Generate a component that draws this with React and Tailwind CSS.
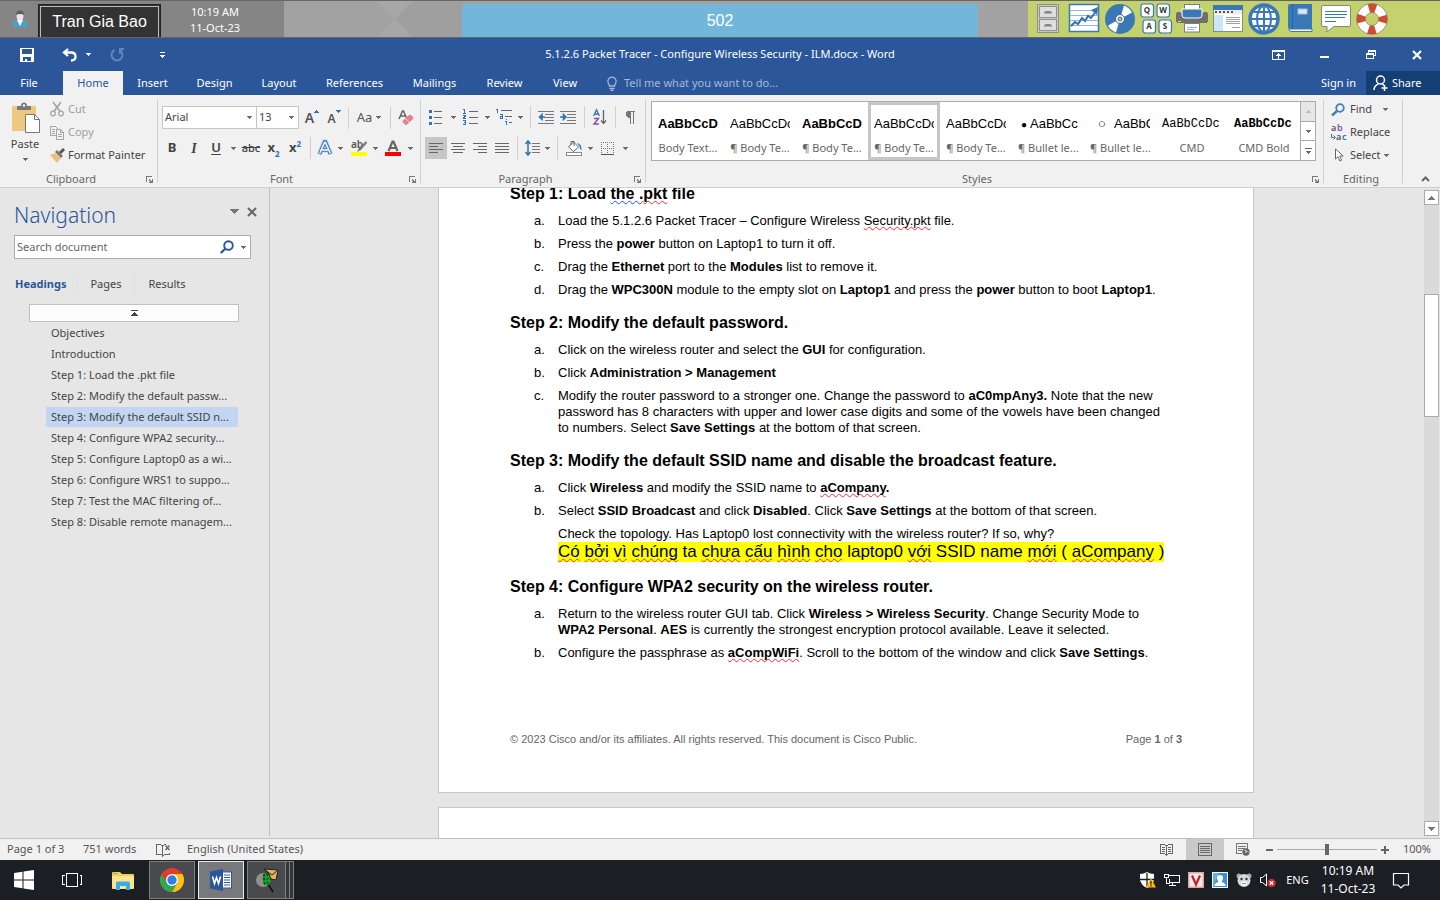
const UI = "font-['Noto_Sans','Open_Sans',sans-serif]";
const DOC = "font-['Liberation_Sans',Arial,sans-serif]";

/* ---------- shared pieces ---------- */

function Svg({ w = 16, h = 16, crisp, className = "", children }) {
  return (
    <svg
      width={w}
      height={h}
      viewBox={`0 0 ${w} ${h}`}
      fill="none"
      aria-hidden="true"
      shapeRendering={crisp ? "crispEdges" : "auto"}
      className={`shrink-0 overflow-visible ${className}`}
    >
      {children}
    </svg>
  );
}

function Arrow({ color = "#6b6b6b" }) {
  return (
    <Svg w={5} h={3} crisp>
      <path d="M0 0h5v1h-1v1h-1v1h-1v-1h-1v-1h-1z" fill={color} />
    </Svg>
  );
}

function Tool({ label, className = "w-[22px]", children }) {
  return (
    <button type="button" aria-label={label} className={`flex h-[22px] shrink-0 items-center justify-center ${className}`}>
      {children}
    </button>
  );
}

function Drop({ label, className = "w-3" }) {
  return (
    <Tool label={label} className={className}>
      <Arrow />
    </Tool>
  );
}

function Sep({ className = "w-2" }) {
  return (
    <span className={`flex h-[22px] shrink-0 justify-center ${className}`}>
      <span className="w-px bg-[#d0d0d0]" />
    </span>
  );
}

function Divider() {
  return <span className="my-1 w-px shrink-0 bg-[#d0d0d0]" />;
}

function Group({ label, launcher, className = "", children }) {
  return (
    <section className={`flex flex-col ${className}`}>
      {children}
      <div className="mt-auto flex h-4 items-center pr-1 text-[#666]">
        <span className={`flex-1 text-center ${launcher ? "pr-1" : ""}`}>{label}</span>
        {launcher && (
          <button type="button" aria-label={`${label} settings`}>
            <Svg w={7} h={7} crisp>
              <path d="M0 0h6v1h-5v5h-1zM3 3h1v1h1v1h1v-2h1v4h-4v-1h1v-1h-1z" fill="#777" />
            </Svg>
          </button>
        )}
      </div>
    </section>
  );
}

/* ---------- class control bar ---------- */

function Cabinet() {
  return (
    <Svg w={32} h={32}>
      <rect x="5.5" y="1.5" width="21" height="28" fill="#c9c9c9" stroke="#8f8f8f" />
      <rect x="7.5" y="3.5" width="17" height="11" fill="#dedede" stroke="#8f8f8f" />
      <rect x="7.5" y="16.500" width="17" height="11" fill="#dedede" stroke="#8f8f8f" />
      <path d="M12 10.500q0-2.500 2.500-2.500h3q2.500 0 2.500 2.500zM12 23.500q0-2.500 2.500-2.500h3q2.500 0 2.500 2.500z" fill="#858585" />
    </Svg>
  );
}
function Chart() {
  return (
    <Svg w={32} h={32}>
      <rect x="1.500" y="1.500" width="29" height="27" fill="#fff" stroke="#3d77b5" strokeWidth="1.500" />
      <path d="M2 7.500h28M2 12.500h28M2 17.500h28M2 22.500h28" stroke="#8fb6db" />
      <path d="M3 23l4-4 3 2 4-6 3 3 3-5 3 2 6-8" stroke="#3571b0" strokeWidth="2" />
      <path d="M23 7l7-3-1 8z" fill="#3571b0" />
    </Svg>
  );
}
function Disc() {
  return (
    <Svg w={32} h={32}>
      <circle cx="16" cy="16" r="15" fill="#3b78b8" />
      <path d="M16 16L20 2.500a14 14 0 0 1 8 7zM16 16L12 29.500a14 14 0 0 1-8-7z" fill="#fff" />
      <circle cx="16" cy="16" r="4.500" fill="#fff" stroke="#2c669f" />
      <circle cx="16" cy="16" r="2" fill="#c3d26c" stroke="#2c669f" />
    </Svg>
  );
}
function Keys() {
  const keys = [["Q", 1, 1], ["W", 17, 1], ["A", 3, 17], ["S", 19, 17]];
  return (
    <Svg w={32} h={32}>
      {keys.map(([k, x, y]) => (
        <g key={k}>
          <rect x={x} y={y} width="12.500" height="13" rx="2.500" fill="#fff" stroke="#3b78b8" strokeWidth="1.200" />
          <text x={x + 6} y={y + 9} textAnchor="middle" fontSize="8" fontWeight="700" fontFamily="Open Sans" fill="#333">{k}</text>
        </g>
      ))}
    </Svg>
  );
}
function Printer() {
  return (
    <Svg w={32} h={32}>
      <path d="M2 9q-2 0-2 2v7q0 2 2 2h28q2 0 2-2v-7q0-2-2-2h-3v2h-22v-2z" fill="#6f6f6f" />
      <path d="M5 10h22v6h-22z" fill="#6f6f6f" />
      <rect x="8.500" y="1.500" width="15" height="6" fill="#fff" stroke="#7c7c7c" />
      <path d="M6 6h20v6q0 3-3 3h-14q-3 0-3-3z" fill="#3b78b8" stroke="#fff" />
      <rect x="2" y="18" width="3" height="1" fill="#d7e04f" />
      <path d="M8.500 20.500h15v8.500h-15z" fill="#fff" stroke="#7c7c7c" />
      <path d="M11 24.500h10M11 26.500h7" stroke="#8fb6db" />
    </Svg>
  );
}
function Browser() {
  return (
    <Svg w={32} h={32}>
      <rect x="1.500" y="2.500" width="29" height="26" fill="#fff" stroke="#8a8a8a" />
      <rect x="1" y="2" width="30" height="5" fill="#3b78b8" />
      <rect x="2" y="7" width="28" height="4" fill="#ececec" />
      <path d="M3 9h18" stroke="#555" strokeWidth="2" strokeDasharray="2 2" />
      <rect x="2" y="12" width="9" height="16" fill="#c9e6fa" />
      <path d="M14 14.500h14M14 16.500h14M14 18.500h14M14 20.500h14M20 24.500h8" stroke="#a0a0a0" />
    </Svg>
  );
}
function GlobeBig() {
  return (
    <Svg w={32} h={32}>
      <circle cx="16" cy="16" r="14" fill="#fff" stroke="#3b78b8" strokeWidth="3.500" />
      <path d="M16 2v28M3 16h26M6 9h20M6 23h20" stroke="#3b78b8" strokeWidth="2" />
      <ellipse cx="16" cy="16" rx="7" ry="13" stroke="#3b78b8" strokeWidth="2" />
    </Svg>
  );
}
function Book() {
  return (
    <Svg w={32} h={32}>
      <path d="M6 1h22v25h-22q-2 0-2-2v-21q0-2 2-2z" fill="#3b78b8" />
      <path d="M5 26h23v2.500h-21q-2 0-2-2.500z" fill="#fff" stroke="#3b78b8" />
      <path d="M8.500 1v25" stroke="#2c669f" />
      <rect x="14" y="6" width="9" height="5" fill="#dceaf7" stroke="#9cc0e2" />
    </Svg>
  );
}
function Comment() {
  return (
    <Svg w={32} h={32}>
      <path d="M3 2.500h26q1.500 0 1.500 1.500v18q0 1.500-1.500 1.500h-15l-7 5.500v-5.500h-4q-1.500 0-1.500-1.500v-18q0-1.500 1.500-1.500z" fill="#fff" stroke="#858585" />
      <path d="M5 8.500h22M5 11.500h22M5 14.500h20M5 18.500h11" stroke="#3b78b8" />
    </Svg>
  );
}
function Lifebuoy() {
  return (
    <Svg w={32} h={32}>
      <circle cx="16" cy="16" r="11" stroke="#fff" strokeWidth="9" />
      <circle cx="16" cy="16" r="11" stroke="#cf4a30" strokeWidth="9" strokeDasharray="7 10.280" strokeDashoffset="3.500" />
      <circle cx="16" cy="16" r="15.500" stroke="#8c7b60" strokeWidth="0.800" />
      <circle cx="16" cy="16" r="6.500" stroke="#8c7b60" strokeWidth="0.800" />
    </Svg>
  );
}

const SHORTCUTS = [
  ["File cabinet", Cabinet], ["Survey", Chart], ["Media", Disc], ["Keyboard", Keys], ["Print", Printer],
  ["Applications", Browser], ["Web", GlobeBig], ["Journal", Book], ["Chat", Comment], ["Help", Lifebuoy],
];

function ControlBar() {
  return (
    <header className={`flex h-[38px] shrink-0 border-y border-[#666] bg-[#a3a2a2] ${DOC}`}>
      <div className="flex w-[284px] shrink-0 bg-[#858585]">
        <span className="flex w-[38px] items-center justify-center pl-[2px]">
          <Svg w={16} h={18}>
            <path d="M0 16q0-5 5-6l3 3 3-3q5 1 5 6-8 3-16 0z" fill="#4ba3c3" />
            <path d="M5 10l3 6 3-6z" fill="#fff" />
            <ellipse cx="8" cy="6" rx="3.500" ry="4.500" fill="#e8e8e8" />
            <path d="M4 5q0-4.500 4-4.500t4 4.500q-4-2-8 0z" fill="#5c5c5c" />
          </Svg>
        </span>
        <span className="mt-[3px] flex w-[123px] border border-b-0 border-[#222] bg-[#333] px-px pt-px">
          <span className="flex flex-1 items-center justify-center border border-b-0 border-[#bbb] text-base text-white">Tran Gia Bao</span>
        </span>
        <span className={`flex w-[108px] flex-col items-center justify-center pt-px text-[11px] leading-4 text-white ${UI}`}>
          <span>10:19 AM</span>
          <span>11-Oct-23</span>
        </span>
      </div>
      <div className="w-[178px] shrink-0">
        <Svg w={178} h={36}>
          <path d="M93 0h36l-18 18zM93 36l18-18 18 18z" fill="#a8a7a7" />
          <path d="M129 0h49v36h-49l-18-18z" fill="#a09f9f" />
        </Svg>
      </div>
      <div className="mt-[3px] flex flex-1 items-center justify-center bg-[#72b7da] text-base text-white">502</div>
      <div className="w-[50px] shrink-0" />
      <nav className="flex w-[412px] shrink-0 gap-1 bg-[#c3d26c] pt-[2px] pl-1" aria-label="Tools">
        {SHORTCUTS.map(([name, Icon]) => (
          <button key={name} type="button" aria-label={name} className="h-8 w-8"><Icon /></button>
        ))}
      </nav>
    </header>
  );
}

/* ---------- title bar and tabs ---------- */

function TitleBar() {
  return (
    <div className="grid h-[33px] shrink-0 grid-cols-[1fr_auto_1fr] items-center bg-[#2b579a] text-white">
      <div className="flex items-center pl-5">
        <button type="button" aria-label="Save">
          <Svg w={14} h={14} crisp>
            <path d="M0 0h14v14h-14zM2 1v5h10v-5zM3 9v4h2v-2h2v2h4v-4z" fill="#fff" fillRule="evenodd" />
          </Svg>
        </button>
        <button type="button" aria-label="Undo" className="ml-[28px]">
          <Svg w={16} h={14}>
            <path d="M6 1L2 4.500l4 3.500M2 4.500h7q4.500 0 4.500 4t-4.500 4" stroke="#fff" strokeWidth="2.300" />
          </Svg>
        </button>
        <button type="button" aria-label="Undo history" className="ml-2"><Arrow color="#fff" /></button>
        <button type="button" aria-label="Repeat" className="ml-[19px]">
          <Svg w={14} h={14}>
            <path d="M9.500 2a5.500 5.500 0 1 1-5 0M10 5.500v-4.500h4" stroke="#6485b7" strokeWidth="2" />
          </Svg>
        </button>
        <button type="button" aria-label="Customize toolbar" className="ml-9 flex flex-col items-center gap-[2px]">
          <span className="h-px w-[5px] bg-white" />
          <Arrow color="#fff" />
        </button>
      </div>
      <h1 className="text-[11px]">5.1.2.6 Packet Tracer - Configure Wireless Security - ILM.docx - Word</h1>
      <div className="flex items-center justify-end pr-[18px]">
        <button type="button" aria-label="Ribbon display options">
          <Svg w={13} h={10} crisp>
            <path d="M0 0h13v10h-13zM1 2v7h11v-7zM6 3h1v1h1v1h1v1h-2v3h-1v-3h-2v-1h1v-1h1z" fill="#fff" fillRule="evenodd" />
          </Svg>
        </button>
        <button type="button" aria-label="Minimize" className="ml-[35px] pt-1">
          <Svg w={9} h={2} crisp><path d="M0 0h9v2h-9z" fill="#fff" /></Svg>
        </button>
        <button type="button" aria-label="Restore" className="ml-[37px]">
          <Svg w={10} h={9} crisp>
            <path d="M2 0h8v6h-2v3h-8v-6h2zM3 2v1h5v2h1v-3zM1 5v3h6v-3z" fill="#fff" fillRule="evenodd" />
          </Svg>
        </button>
        <button type="button" aria-label="Close" className="ml-9">
          <Svg w={10} h={10}><path d="M1 1l8 8M9 1l-8 8" stroke="#fff" strokeWidth="2.200" /></Svg>
        </button>
      </div>
    </div>
  );
}

const TABS = [
  ["Insert", "w-[59px]"], ["Design", "w-[65px]"], ["Layout", "w-16"], ["References", "w-[87px]"],
  ["Mailings", "w-[73px]"], ["Review", "w-[67px]"], ["View", "w-[54px]"],
];

function TabBar() {
  return (
    <div className="flex h-6 shrink-0 items-stretch bg-[#2b579a] text-white">
      <button type="button" className="w-[58px]">File</button>
      <button type="button" className="ml-[5px] w-[60px] bg-[#f1f1f1] text-[#2b579a]">Home</button>
      {TABS.map(([name, width]) => (
        <button key={name} type="button" className={width}>{name}</button>
      ))}
      <label className="ml-[14px] flex flex-1 items-center gap-[6px]">
        <Svg w={12} h={15}>
          <path d="M3.500 10q0-1.500-1.200-2.600a4.200 4.200 0 1 1 7.400 0q-1.200 1.100-1.200 2.600zM3.500 12.500h5M4.500 14.300h3" stroke="#a5b9d9" strokeWidth="1.300" />
        </Svg>
        <input aria-label="Tell me what you want to do" placeholder="Tell me what you want to do..." className="w-52 bg-transparent outline-none placeholder:text-[#a5b9d9] placeholder:opacity-100" />
      </label>
      <button type="button" className="px-[10px]">Sign in</button>
      <button type="button" className="flex w-[74px] items-center gap-1 bg-[#143f74] pl-[7px]">
        <Svg w={15} h={16}>
          <circle cx="7.500" cy="5" r="4" stroke="#fff" strokeWidth="1.500" />
          <path d="M1 15q0-4 4.500-6.300M9 8.500l2 2M11.500 10v6M8.500 13h6" stroke="#fff" strokeWidth="1.500" />
        </Svg>
        Share
      </button>
    </div>
  );
}

/* ---------- ribbon ---------- */

function ClipboardGroup() {
  return (
    <Group label="Clipboard" launcher className="w-[157px] shrink-0">
      <div className="flex pt-[3px]">
        <button type="button" className="flex w-[50px] flex-col items-center pt-1 text-[#444]">
          <Svg w={30} h={32}>
            <path d="M2 4h24v25h-24z" fill="#edc87e" />
            <path d="M7 4h4q0-3.500 3-3.500t3 3.500h4v4h-14z" fill="#777" />
            <circle cx="14" cy="3.500" r="1.300" fill="#f1f1f1" />
            <path d="M15.500 12.500h9l5 5v13h-14z" fill="#fff" stroke="#777" />
            <path d="M24.500 12.500v5h5" stroke="#777" />
          </Svg>
          <span className="mt-[3px] leading-[14px]">Paste</span>
          <span className="mt-[7px]"><Arrow /></span>
        </button>
        <div className="flex flex-col">
          <button type="button" className="flex h-[23px] items-center gap-1 text-[#a0a0a0]">
            <Svg w={14} h={15}>
              <path d="M3 0l7.500 10M11 0L3.500 10" stroke="#a6a6a6" strokeWidth="1.800" />
              <circle cx="3" cy="11.500" r="2.300" stroke="#a6a6a6" strokeWidth="1.300" />
              <circle cx="11" cy="11.500" r="2.300" stroke="#a6a6a6" strokeWidth="1.300" />
            </Svg>
            Cut
          </button>
          <button type="button" className="flex h-[23px] items-center gap-1 text-[#a0a0a0]">
            <Svg w={14} h={14} crisp>
              <path d="M6.500 9.500h-6v-9h5l2 2v1M6.500 3.500h4l3 3v7h-7zM10.500 3.500v3h3M2 3.500h3M2 5.500h3M2 7.500h3M8 8.500h4M8 10.500h4" stroke="#a6a6a6" />
            </Svg>
            Copy
          </button>
          <button type="button" className="flex h-[23px] items-center gap-1 text-[#444]">
            <Svg w={14} h={15}>
              <path d="M0 7l5-2 6 5-4 5z" fill="#edc07a" />
              <path d="M5 4l2-2 6 6-2 2z" fill="#777" />
              <path d="M10 5l4-4" stroke="#555" strokeWidth="3" />
            </Svg>
            Format Painter
          </button>
        </div>
      </div>
    </Group>
  );
}

function FakeSelect({ label, value, className }) {
  return (
    <label className={`flex h-[23px] items-center border border-[#c6c6c6] bg-white pr-1 ${className}`}>
      <select aria-label={label} defaultValue={value} className="min-w-0 flex-1 appearance-none bg-transparent pl-[2px] text-[#444] outline-none">
        <option>{value}</option>
      </select>
      <Arrow />
    </label>
  );
}

function FontGroup() {
  return (
    <Group label="Font" launcher className="w-[262px] shrink-0">
      <div className="flex items-center pt-[11px] pl-1 text-[#555]">
        <FakeSelect label="Font name" value="Arial" className="w-[95px]" />
        <FakeSelect label="Font size" value="13" className="-ml-px mr-[2px] w-[43px]" />
        <Tool label="Grow font">
          <span className="text-[14px] font-semibold">A</span>
          <Svg w={5} h={3} crisp className="mb-3"><path d="M2 0h1v1h1v1h1v1h-5v-1h1v-1h1z" fill="#2e75b5" /></Svg>
        </Tool>
        <Tool label="Shrink font">
          <span className="pt-[2px] text-[12px] font-semibold">A</span>
          <Svg w={5} h={3} crisp className="mb-3"><path d="M0 0h5v1h-1v1h-1v1h-1v-1h-1v-1h-1z" fill="#2e75b5" /></Svg>
        </Tool>
        <Sep className="w-[6px]" />
        <Tool label="Change case" className="w-9 gap-1"><span className="text-[13px]">Aa</span><Arrow /></Tool>
        <Sep className="w-[6px]" />
        <Tool label="Clear formatting" className="w-[26px]">
          <Svg w={16} h={16}>
            <path d="M1 9l3.500-8h1l3 7M2.500 6h5" stroke="#666" strokeWidth="1.500" />
            <path d="M5 10.500l6-5.500q1-1 2 0l2 2q1 1 0 2l-6 5.500q-1 1-2 0l-2-2q-1-1 0-2z" fill="#e8808f" />
            <path d="M7.500 8.500l4 4" stroke="#f1f1f1" />
          </Svg>
        </Tool>
      </div>
      <div className="flex items-center pt-2 pl-[3px] text-[13px] text-[#444]">
        <Tool label="Bold"><span className="font-bold">B</span></Tool>
        <Tool label="Italic"><span className="font-['Liberation_Serif',serif] text-[14px] font-bold italic">I</span></Tool>
        <Tool label="Underline"><span className="font-semibold underline underline-offset-2">U</span></Tool>
        <Drop label="Underline style" />
        <Tool label="Strikethrough" className="w-6"><span className="text-[11px] font-medium line-through">abc</span></Tool>
        <Tool label="Subscript" className="w-[21px]"><span className="font-bold">x</span><span className="self-end text-[8px] leading-[10px] font-bold text-[#2e75b5]">2</span></Tool>
        <Tool label="Superscript"><span className="font-bold">x</span><span className="self-start pt-[2px] text-[8px] leading-[10px] font-bold text-[#2e75b5]">2</span></Tool>
        <Sep />
        <Tool label="Text effects">
          <Svg w={16} h={16}>
            <path d="M2.500 14L7.500 2h1l5 12M4.500 10h7" stroke="#b5d3ee" strokeWidth="5" />
            <path d="M2.500 14L7.500 2h1l5 12M4.500 10h7" stroke="#3a78b5" strokeWidth="3.400" />
            <path d="M2.700 13.300L7.500 2.500h1l4.800 10.800M4.500 10h7" stroke="#fff" strokeWidth="1.500" />
          </Svg>
        </Tool>
        <Drop label="Text effects menu" className="w-[9px]" />
        <Tool label="Highlight" className="ml-[3px] w-[22px]">
          <Svg w={16} h={16}>
            <text x="0" y="8" fontSize="10" fontFamily="Noto Sans" fontWeight="600" fill="#555">ab</text>
            <path d="M15 1L8 8l-2 4 4-2 6-7z" fill="#777" />
            <path d="M0 12h16v4h-16z" fill="#ff0" />
          </Svg>
        </Tool>
        <Drop label="Highlight color" className="w-[10px]" />
        <Tool label="Font color" className="ml-[2px] w-[22px]">
          <Svg w={16} h={16}>
            <path d="M3.500 11L7.500 1.500h1L12.500 11M5 8h6" stroke="#666" strokeWidth="2.200" />
            <path d="M0 12h16v4h-16z" fill="#f00" />
          </Svg>
        </Tool>
        <Drop label="Font color menu" />
      </div>
    </Group>
  );
}

function Lines({ rows }) {
  return (
    <Svg w={14} h={10} crisp>
      {rows.map(([x, w], i) => <rect key={i} x={x} y={i * 3} width={w} height="1" fill="#666" />)}
    </Svg>
  );
}

const DENT = "M0 .500h16M7 3.500h9M7 6.500h9M7 9.500h9M0 12.500h16";

function ParagraphGroup() {
  return (
    <Group label="Paragraph" launcher className="w-[224px] shrink-0">
      <div className="flex items-center pt-[11px] pl-1">
        <Tool label="Bullets">
          <Svg w={14} h={16} crisp>
            <path d="M0 1h3v3h-3zM0 7h3v3h-3zM0 13h3v3h-3z" fill="#2e75b5" />
            <path d="M5 2.500h8M5 8.500h8M5 14.500h8" stroke="#666" />
          </Svg>
        </Tool>
        <Drop label="Bullet library" />
        <Tool label="Numbering">
          <Svg w={15} h={16} crisp>
            <path d="M0 0h2v4h1v1h-3v-1h1v-3h-1zM0 6h3v2h-1v1h1v1h-3v-2h1v-1h-1zM0 11h3v5h-3v-1h2v-1h-1v-1h1v-1h-2z" fill="#2e75b5" />
            <path d="M6 2.500h9M6 8.500h9M6 14.500h9" stroke="#666" />
          </Svg>
        </Tool>
        <Drop label="Numbering library" />
        <Tool label="Multilevel list">
          <Svg w={17} h={16} crisp>
            <path d="M0 0h2v4h-1v-3h-1zM4 5h3v5h-3v-3h2v-1h-2zM5 8v1h1v-1zM10 10h1v1h-1zM9 12h2v4h-1v-3h-1z" fill="#2e75b5" fillRule="evenodd" />
            <path d="M5 1.500h11M9 7.500h7M13 13.500h3" stroke="#666" />
          </Svg>
        </Tool>
        <Drop label="Multilevel library" className="w-[10px]" />
        <Sep className="w-[10px]" />
        <Tool label="Decrease indent">
          <Svg w={16} h={13}>
            <path d={DENT} stroke="#777" shapeRendering="crispEdges" />
            <path d="M4 3.500L1.500 6l2.500 2.500zM3 6h4" fill="#2e75b5" stroke="#2e75b5" strokeWidth="1.500" />
          </Svg>
        </Tool>
        <Tool label="Increase indent">
          <Svg w={16} h={13}>
            <path d={DENT} stroke="#777" shapeRendering="crispEdges" />
            <path d="M3.500 3.500L6 6 3.500 8.500zM0 6h4" fill="#2e75b5" stroke="#2e75b5" strokeWidth="1.500" />
          </Svg>
        </Tool>
        <Sep className="w-[10px]" />
        <Tool label="Sort">
          <Svg w={14} h={16}>
            <path d="M.600 7L3.500.800 6.400 7M1.500 5h4" stroke="#2e75b5" strokeWidth="1.300" />
            <path d="M1 9.500h4.500L1 15h5" stroke="#8d4bab" strokeWidth="1.400" />
            <path d="M10.500 1v13M8 11.500l2.500 3 2.500-3" stroke="#666" strokeWidth="1.300" />
          </Svg>
        </Tool>
        <Sep />
        <Tool label="Show marks" className="w-[22px]">
          <Svg w={10} h={13} crisp>
            <path d="M3 0h7v1h-1v12h-1v-12h-2v12h-1v-6h-2v-1h-1v-1h-1v-4h1v-1h1z" fill="#777" />
          </Svg>
        </Tool>
      </div>
      <div className="flex items-center pt-[9px] pl-1">
        <Tool label="Align left" className="w-[22px] bg-[#c6c6c6]"><Lines rows={[[0, 14], [0, 9], [0, 14], [0, 9]]} /></Tool>
        <Tool label="Center"><Lines rows={[[0, 14], [2, 10], [0, 14], [2, 10]]} /></Tool>
        <Tool label="Align right"><Lines rows={[[0, 14], [5, 9], [0, 14], [5, 9]]} /></Tool>
        <Tool label="Justify"><Lines rows={[[0, 14], [0, 14], [0, 14], [0, 14]]} /></Tool>
        <Sep />
        <Tool label="Line spacing">
          <Svg w={15} h={16}>
            <path d="M3 1v14M.500 4L3 1l2.500 3M.500 12L3 15l2.500-3" stroke="#2e75b5" strokeWidth="1.500" />
            <path d="M7 3.500h8M7 6.500h8M7 9.500h8M7 12.500h8" stroke="#777" shapeRendering="crispEdges" />
          </Svg>
        </Tool>
        <Drop label="Line spacing menu" className="w-[8px]" />
        <Sep className="w-3" />
        <Tool label="Shading">
          <Svg w={17} h={16}>
            <path d="M2.500 7l5-5 5 5-5 4.500zM5 5V1.500h3V6" stroke="#666" fill="#fff" />
            <path d="M11 3q5 1 4.500 7-1.500 0-2-4z" fill="#2e75b5" />
            <rect x=".500" y="12.500" width="15" height="3" fill="#fff" stroke="#888" />
          </Svg>
        </Tool>
        <Drop label="Shading color" className="w-[10px]" />
        <Tool label="Borders" className="w-6">
          <Svg w={13} h={13} crisp>
            <path d="M0 .500h13M0 6.500h13M.500 0v12M6.500 0v12M12.500 0v12" stroke="#777" strokeDasharray="1 1" />
            <path d="M0 12.500h13" stroke="#555" />
          </Svg>
        </Tool>
        <Drop label="Border styles" />
      </div>
    </Group>
  );
}

const STYLES = [
  { text: "AaBbCcD", name: "Body Text...", look: "font-bold" },
  { text: "AaBbCcDc", name: "¶ Body Te...", look: "" },
  { text: "AaBbCcD", name: "¶ Body Te...", look: "font-bold" },
  { text: "AaBbCcDc", name: "¶ Body Te...", look: "", on: true },
  { text: "AaBbCcDc", name: "¶ Body Te...", look: "" },
  { text: "AaBbCc", name: "¶ Bullet le...", look: "", bullet: "●" },
  { text: "AaBbC", name: "¶ Bullet le...", look: "", bullet: "○" },
  { text: "AaBbCcDc", name: "CMD", look: "", mono: true },
  { text: "AaBbCcDc", name: "CMD Bold", look: "font-bold", mono: true },
];

function StylesGroup() {
  return (
    <Group label="Styles" launcher className="min-w-0 flex-1">
      <div className="flex pt-[6px] pr-[7px] pl-[5px]">
        <div className="flex h-[60px] min-w-0 flex-1 border border-[#ababab] bg-white">
          <div className="flex min-w-0 flex-1 overflow-hidden">
            {STYLES.map((s, i) => (
              <button
                key={i}
                type="button"
                className={`flex w-[72px] shrink-0 flex-col border-[3px] px-[3px] pt-[9px] ${s.on ? "border-[#c6c6c6]" : "border-transparent"}`}
              >
                <span className={`flex h-5 w-full items-center overflow-hidden whitespace-nowrap text-black ${s.mono ? "font-['Liberation_Mono','Courier_New',monospace] text-[12px]" : `${DOC} text-[13px]`} ${s.look}`}>
                  {s.bullet && <span className={s.bullet === "●" ? "w-3 shrink-0 text-[10px]" : "w-6 shrink-0 text-[13px]"}>{s.bullet}</span>}
                  {s.text}
                </span>
                <span className="mt-[6px] w-full text-center leading-4 whitespace-nowrap text-[#666]">{s.name}</span>
              </button>
            ))}
          </div>
          <div className="flex w-[15px] shrink-0 flex-col divide-y divide-[#ababab] border-l border-[#ababab]">
            <button type="button" aria-label="Previous styles" className="flex flex-1 items-center justify-center bg-[#e6e6e6]">
              <span className="rotate-180"><Arrow color="#bbb" /></span>
            </button>
            <button type="button" aria-label="Next styles" className="flex flex-1 items-center justify-center"><Arrow /></button>
            <button type="button" aria-label="More styles" className="flex flex-1 flex-col items-center justify-center gap-[2px]">
              <span className="h-px w-[7px] bg-[#6b6b6b]" />
              <Arrow />
            </button>
          </div>
        </div>
      </div>
    </Group>
  );
}

function EditingGroup() {
  return (
    <Group label="Editing" className="w-[78px] shrink-0 text-[#444]">
      <div className="flex flex-col pt-[3px] pl-[7px]">
        <button type="button" className="flex h-[23px] items-center">
          <Svg w={14} h={13}>
            <circle cx="9" cy="5" r="3.800" stroke="#3f7fc1" strokeWidth="1.800" />
            <path d="M6 8l-5 4.500" stroke="#3f7fc1" strokeWidth="2.400" />
          </Svg>
          <span className="mr-[11px] ml-[5px]">Find</span>
          <Arrow />
        </button>
        <button type="button" className="flex h-[23px] items-center gap-[3px]">
          <Svg w={16} h={16}>
            <g fontFamily="Noto Sans" fontSize="9" fontWeight="600">
              <text x="0" y="6" fill="#555">a</text>
              <text x="6" y="6" fill="#8d4bab">b</text>
              <text x="5" y="15" fill="#555">a</text>
              <text x="11" y="15" fill="#2e75b5">c</text>
            </g>
            <path d="M.500 9v3.500h3M2.500 10.500l2 2-2 2" stroke="#2e75b5" />
          </Svg>
          Replace
        </button>
        <button type="button" className="flex h-[23px] items-center">
          <Svg w={14} h={15} className="mr-[5px]">
            <path d="M4.500 1v10l2.500-2.300 1.800 4.300 1.800-.800-1.800-4.200h3.400z" fill="#fff" stroke="#666" />
          </Svg>
          <span className="mr-[3px]">Select</span>
          <Arrow />
        </button>
      </div>
    </Group>
  );
}

function Ribbon() {
  return (
    <div className="flex h-[93px] shrink-0 border-b border-[#d0d0d0] bg-[#f1f1f1]">
      <ClipboardGroup />
      <Divider />
      <FontGroup />
      <Divider />
      <ParagraphGroup />
      <Divider />
      <StylesGroup />
      <Divider />
      <EditingGroup />
      <Divider />
      <div className="flex w-[37px] shrink-0 items-end justify-end pr-[10px] pb-[5px]">
        <button type="button" aria-label="Collapse the ribbon">
          <Svg w={9} h={6}><path d="M1 5l3.500-3.500L8 5" stroke="#666" strokeWidth="2" /></Svg>
        </button>
      </div>
    </div>
  );
}

/* ---------- navigation pane ---------- */

const HEADINGS = [
  "Objectives", "Introduction", "Step 1: Load the .pkt file", "Step 2: Modify the default passw...",
  "Step 3: Modify the default SSID n...", "Step 4: Configure WPA2 security...", "Step 5: Configure Laptop0 as a wi...",
  "Step 6: Configure WRS1 to suppo...", "Step 7: Test the MAC filtering of...", "Step 8: Disable remote managem...",
];

function NavigationPane() {
  return (
    <aside className="mb-[2px] w-[270px] shrink-0 border-r border-[#c0c0c0] text-[#444]">
      <div className="flex items-center pt-3 pr-3 pl-[14px]">
        <h2 className="flex-1 text-[21px] leading-[30px] font-light text-[#2b579a]">Navigation</h2>
        <button type="button" aria-label="Pane options" className="mb-[7px]">
          <Svg w={9} h={5} crisp><path d="M0 0h9v1h-1v1h-1v1h-1v1h-1v1h-1v-1h-1v-1h-1v-1h-1v-1h-1z" fill="#777" /></Svg>
        </button>
        <button type="button" aria-label="Close pane" className="mb-[7px] ml-2">
          <Svg w={10} h={10}><path d="M1 1l8 8M9 1l-8 8" stroke="#666" strokeWidth="2" /></Svg>
        </button>
      </div>
      <label className="mt-[5px] mr-[18px] ml-[14px] flex h-6 items-center border border-[#ababab] bg-white pr-1">
        <input aria-label="Search document" placeholder="Search document" className="min-w-0 flex-1 pl-[2px] outline-none placeholder:text-[#666] placeholder:opacity-100" />
        <Svg w={14} h={14}>
          <circle cx="8.500" cy="5.500" r="4.300" stroke="#2b579a" strokeWidth="1.900" />
          <path d="M5.500 8.500L.800 13" stroke="#2b579a" strokeWidth="2.400" />
        </Svg>
        <span className="ml-[7px]"><Arrow /></span>
      </label>
      <div className="mt-4 flex h-[18px] items-center pl-[15px]">
        <button type="button" className="w-[62px] text-left font-bold text-[#2b579a]">Headings</button>
        <span className="h-full w-px bg-[#e0e0e0]" />
        <button type="button" className="w-14 text-center">Pages</button>
        <span className="h-full w-px bg-[#e0e0e0]" />
        <button type="button" className="w-16 text-center">Results</button>
      </div>
      <button type="button" aria-label="Jump to top" className="mt-[11px] ml-[29px] flex h-[18px] w-[210px] items-center justify-center border border-[#c0c0c0] bg-[#fdfdfd]">
        <Svg w={7} h={6} crisp>
          <path d="M0 0h7v1h-7zM3 2h1v1h1v1h1v1h1v1h-7v-1h1v-1h1v-1h1z" fill="#444" />
        </Svg>
      </button>
      <ul className="mt-px mr-[31px] ml-[46px]">
        {HEADINGS.map((h, i) => (
          <li key={h} className="h-[21px]">
            <a href="#" className={`block h-5 pl-[5px] leading-5 whitespace-nowrap ${i === 4 ? "bg-[#c2d5f2]" : ""}`}>{h}</a>
          </li>
        ))}
      </ul>
    </aside>
  );
}

/* ---------- document ---------- */

function Typo({ blue, children }) {
  return (
    <span className={`underline decoration-wavy decoration-1 underline-offset-1 [text-decoration-skip-ink:none] ${blue ? "decoration-blue-600" : "decoration-red-500"}`}>
      {children}
    </span>
  );
}

function Step({ title, children }) {
  return (
    <section className="mb-[15px]">
      <h3 className="mb-[9px] text-base leading-5 font-bold whitespace-nowrap">{title}</h3>
      <ol className="flex flex-col gap-[7px] pl-6">{children}</ol>
    </section>
  );
}

function Item({ mark, children }) {
  return (
    <li className="flex whitespace-nowrap">
      <span className="w-6 shrink-0">{mark}</span>
      <div>{children}</div>
    </li>
  );
}

function DocumentView() {
  return (
    <main className={`min-w-0 flex-1 overflow-hidden pr-[2px] text-black ${DOC}`}>
      <article className="mx-auto -mt-2 w-[816px] border border-[#c6c6c6] bg-white px-[71px] pt-[3px] pb-[45px] text-[13px] leading-4">
        <Step title={<>Step 1: Load <Typo blue>the .</Typo><Typo>pkt</Typo> file</>}>
          <Item mark="a.">Load the 5.1.2.6 Packet Tracer – Configure Wireless <Typo>Security.pkt</Typo> file.</Item>
          <Item mark="b.">Press the <b>power</b> button on Laptop1 to turn it off.</Item>
          <Item mark="c.">Drag the <b>Ethernet</b> port to the <b>Modules</b> list to remove it.</Item>
          <Item mark="d.">Drag the <b>WPC300N</b> module to the empty slot on <b>Laptop1</b> and press the <b>power</b> button to boot <b>Laptop1</b>.</Item>
        </Step>
        <Step title="Step 2: Modify the default password.">
          <Item mark="a.">Click on the wireless router and select the <b>GUI</b> for configuration.</Item>
          <Item mark="b.">Click <b>Administration &gt; Management</b></Item>
          <Item mark="c.">
            Modify the router password to a stronger one. Change the password to <b>aC0mpAny3.</b> Note that the new<br />
            password has 8 characters with upper and lower case digits and some of the vowels have been changed<br />
            to numbers. Select <b>Save Settings</b> at the bottom of that screen.
          </Item>
        </Step>
        <Step title="Step 3: Modify the default SSID name and disable the broadcast feature.">
          <Item mark="a.">Click <b>Wireless</b> and modify the SSID name to <b><Typo>aCompany</Typo>.</b></Item>
          <Item mark="b.">
            <p>Select <b>SSID Broadcast</b> and click <b>Disabled</b>. Click <b>Save Settings</b> at the bottom of that screen.</p>
            <p className="mt-[7px]">Check the topology. Has Laptop0 lost connectivity with the wireless router? If so, why?</p>
            <p className="w-fit bg-[#ff0] text-[17px] leading-5">
              <Typo>Có</Typo> <Typo>bởi</Typo> <Typo>vì</Typo> <Typo>chúng</Typo> ta <Typo>chưa</Typo> <Typo>cấu</Typo> <Typo>hình</Typo> <Typo>cho</Typo> laptop0 <Typo>với</Typo> SSID name <Typo>mới</Typo> ( <Typo>aCompany</Typo> )
            </p>
          </Item>
        </Step>
        <Step title="Step 4: Configure WPA2 security on the wireless router.">
          <Item mark="a.">
            Return to the wireless router GUI tab. Click <b>Wireless &gt; Wireless Security</b>. Change Security Mode to<br />
            <b>WPA2 Personal</b>. <b>AES</b> is currently the strongest encryption protocol available. Leave it selected.
          </Item>
          <Item mark="b.">Configure the passphrase as <b><Typo>aCompWiFi</Typo></b>. Scroll to the bottom of the window and click <b>Save Settings</b>.</Item>
        </Step>
        <footer className="mt-[70px] flex justify-between text-[11px] text-[#666]">
          <span>© 2023 Cisco and/or its affiliates. All rights reserved. This document is Cisco Public.</span>
          <span>Page <b>1</b> of <b>3</b></span>
        </footer>
      </article>
      <div className="mx-auto mt-[14px] h-24 w-[816px] border border-[#c6c6c6] bg-white" />
    </main>
  );
}

function ScrollColumn() {
  return (
    <div className="flex w-4 shrink-0 flex-col pt-[2px] pr-px pb-[2px]">
      <div className="flex flex-1 flex-col bg-[#dadada]">
        <button type="button" aria-label="Scroll up" className="flex h-[15px] items-center justify-center border border-[#ababab] bg-white">
          <Svg w={7} h={4} crisp><path d="M3 0h1v1h1v1h1v1h1v1h-7v-1h1v-1h1v-1h1z" fill="#777" /></Svg>
        </button>
        <div className="mt-[89px] h-[123px] border border-[#ababab] bg-white" />
        <button type="button" aria-label="Scroll down" className="mt-auto flex h-[15px] items-center justify-center border border-[#ababab] bg-white">
          <span className="rotate-180"><Svg w={7} h={4} crisp><path d="M3 0h1v1h1v1h1v1h1v1h-7v-1h1v-1h1v-1h1z" fill="#777" /></Svg></span>
        </button>
      </div>
    </div>
  );
}

/* ---------- status bar ---------- */

function StatusBar() {
  return (
    <div className="flex h-[22px] shrink-0 items-center border-t border-[#c0c0c0] bg-[#f1f1f1] pl-[7px] text-[#555]">
      <span className="w-[76px]">Page 1 of 3</span>
      <span className="w-[73px]">751 words</span>
      <button type="button" aria-label="Proofing" className="w-[31px]">
        <Svg w={14} h={13}>
          <path d="M6.500 11.500h-6v-10h4l2 1.500zM6.500 3l2-1.500h1M6.500 11.500v1.500l2-1.500h5v-2" stroke="#666" shapeRendering="crispEdges" />
          <path d="M9.500 2.500l4 4.500M13.500 2.500l-4 4.500" stroke="#666" strokeWidth="1.500" />
        </Svg>
      </button>
      <span className="flex-1">English (United States)</span>
      <button type="button" aria-label="Read mode" className="flex w-[38px] justify-center pr-[2px]">
        <Svg w={13} h={13} crisp>
          <path d="M.500 1.500h4l2 1.500 2-1.500h4v9h-4l-2 1.500-2-1.500h-4zM6.500 3v10M2 4.500h3M2 6.500h3M2 8.500h3M8 4.500h3M8 6.500h3M8 8.500h3" stroke="#666" />
        </Svg>
      </button>
      <button type="button" aria-label="Print layout" className="flex h-full w-[38px] items-center justify-center bg-[#c9c9c9]">
        <Svg w={14} h={13} crisp>
          <path d="M.500.500h13v12h-13zM2 3.500h10M2 5.500h10M2 7.500h10M2 9.500h10" stroke="#666" />
        </Svg>
      </button>
      <button type="button" aria-label="Web layout" className="flex w-[38px] justify-center">
        <Svg w={14} h={13}>
          <path d="M6 10.500H.500v-10h11v5M2 3.500h8M2 5.500h7M2 7.500h4" stroke="#777" shapeRendering="crispEdges" />
          <circle cx="10" cy="9" r="3.700" fill="#666" />
          <path d="M8.500 7l2 1-1 2M11.500 8.500l1 1" stroke="#f1f1f1" />
        </Svg>
      </button>
      <button type="button" aria-label="Zoom out" className="ml-1 flex h-4 w-[7px] items-center">
        <span className="h-[2px] w-[7px] bg-[#666]" />
      </button>
      <input
        type="range"
        aria-label="Zoom"
        min="0"
        max="100"
        defaultValue="50"
        className="ml-1 h-[11px] w-[100px] appearance-none bg-[linear-gradient(#aaa,#aaa)] bg-[length:100%_1px] bg-center bg-no-repeat [&::-webkit-slider-thumb]:h-[11px] [&::-webkit-slider-thumb]:w-1 [&::-webkit-slider-thumb]:appearance-none [&::-webkit-slider-thumb]:bg-[#666]"
      />
      <button type="button" aria-label="Zoom in" className="ml-1">
        <Svg w={8} h={8} crisp><path d="M3 0h2v3h3v2h-3v3h-2v-3h-3v-2h3z" fill="#666" /></Svg>
      </button>
      <span className="w-[51px] pr-[9px] text-right">100%</span>
    </div>
  );
}

/* ---------- taskbar ---------- */

function Taskbar() {
  return (
    <footer className="flex h-10 shrink-0 items-center bg-[#1b1e23] text-white">
      <button type="button" aria-label="Start" className="flex w-12 justify-center">
        <Svg w={20} h={20}>
          <path d="M0 3l8.500-1.200V9.500H0zM9.500 1.600L20 0v9.500H9.500zM0 10.500h8.500v7.700L0 17zM9.500 10.500H20V20L9.500 18.400z" fill="#fff" />
        </Svg>
      </button>
      <button type="button" aria-label="Task view" className="flex w-12 justify-center">
        <Svg w={20} h={14} crisp>
          <path d="M4.500.500h11v13h-11zM2.500 2.500h-2v9h2M17.500 2.500h2v9h-2" stroke="#fff" />
        </Svg>
      </button>
      <button type="button" aria-label="File Explorer" className="flex w-[53px] justify-center">
        <Svg w={22} h={19}>
          <path d="M0 2q0-1 1-1h7l2 2h11q1 0 1 1v13h-22z" fill="#f3cd5c" />
          <path d="M0 5h22v12q0 1-1 1h-20q-1 0-1-1z" fill="#ffe48f" />
          <path d="M4 19v-7q0-1.500 1.500-1.500h11q1.500 0 1.500 1.500v7h-4v-4h-6v4z" fill="#36aee8" />
          <path d="M1.500 2.500h3" stroke="#56b96b" />
        </Svg>
      </button>
      <button type="button" aria-label="Chrome" className="flex h-[38px] w-[46px] items-center justify-center border border-[#808080] bg-[#484a4d]">
        <Svg w={24} h={24}>
          <circle cx="12" cy="12" r="12" fill="#e33b2e" />
          <path d="M12 6h10.400A12 12 0 0 1 12 24l5.200-9z" fill="#fbc116" />
          <path d="M6.800 15L1.600 6A12 12 0 0 0 12 24l5.200-9z" fill="#2da94f" />
          <circle cx="12" cy="12" r="6" fill="#fff" />
          <circle cx="12" cy="12" r="4.700" fill="#2f7de9" />
        </Svg>
      </button>
      <button type="button" aria-label="Word" className="ml-[3px] flex h-[38px] w-[46px] items-center justify-center border border-[#e8e8e8] bg-[#77797c]">
        <Svg w={22} h={22}>
          <path d="M12 3h9.500v16H12z" fill="#fff" stroke="#2b579a" />
          <path d="M14 6h6M14 8.500h6M14 11h6M14 13.500h6M14 16h6" stroke="#2b579a" />
          <path d="M0 2.500L13 0v22L0 19.500z" fill="#2b579a" />
          <path d="M2.500 7.500L4.500 14.500 6.500 8.500 8.500 14.500 10.500 7.500" stroke="#fff" strokeWidth="1.600" />
        </Svg>
      </button>
      <button type="button" aria-label="Packet Tracer" className="ml-[3px] flex h-[38px] w-[39px] items-center justify-center border border-[#808080] bg-[#484a4d]">
        <Svg w={24} h={24}>
          <path d="M13 16l5 8" stroke="#111" strokeWidth="1.800" />
          <circle cx="8" cy="12" r="7" fill="#8f9290" />
          <path d="M8 6q7-2 8 4l-1 6-6 1q-2-5-1-11z" fill="#0a5c12" />
          <path d="M8 9h8M8 13h8M11 6v11M14 7v9" stroke="#1fc02a" />
          <path d="M9 1l14 1-2 10-5-1-2-5z" fill="#e3b45a" stroke="#222" />
          <path d="M9 1l8 6 6-5" stroke="#222" />
        </Svg>
      </button>
      <span className="h-[38px] w-1 border border-l-0 border-[#808080] bg-[#333538]" />
      <span className="h-[38px] w-1 border border-l-0 border-[#808080] bg-[#333538]" />

      <div className="ml-auto flex items-center">
        <button type="button" aria-label="Security" className="flex w-6 justify-center">
          <Svg w={16} h={16}>
            <path d="M7 0q3 2 7 2v6q-1 5-7 8-6-3-7-8V2q4 0 7-2z" fill="#fff" />
            <path d="M7 1v14M0 7.500h14" stroke="#1b1e23" strokeWidth="1.300" />
            <path d="M11 6l5 9.500H6z" fill="#fdb813" />
            <path d="M11 9v3.500M11 13.300v1.200" stroke="#222" strokeWidth="1.200" />
          </Svg>
        </button>
        <button type="button" aria-label="Network" className="flex w-6 justify-center">
          <Svg w={16} h={14} crisp>
            <path d="M5 2.500h10.500v7h-10v-4M.500 1.500h4v3h-4zM2.500 4v6h3M8.500 10v2M5 12.500h7" stroke="#fff" />
          </Svg>
        </button>
        <button type="button" aria-label="Input method" className="flex w-6 justify-center">
          <Svg w={16} h={16}>
            <rect width="16" height="16" fill="#f4eaea" />
            <path d="M0 0h16v16h-16zM1.500 1.500v13h13v-13z" fill="#dca5a5" fillRule="evenodd" />
            <path d="M4 3.500l4 9 4-9" stroke="#c22020" strokeWidth="2.200" />
          </Svg>
        </button>
        <button type="button" aria-label="Student" className="flex w-6 justify-center">
          <Svg w={16} h={16}>
            <rect width="16" height="16" fill="#fff" />
            <rect x="1" y="1" width="14" height="14" fill="#3a8fd0" />
            <path d="M1 15V1h6z" fill="#62b1e6" />
            <path d="M2 14q1-3.500 4.500-4-1.500-2-1.500-4 0-3 3-3t3 3q0 2-1.500 4 3.500.500 4.500 4z" fill="#fff" />
          </Svg>
        </button>
        <button type="button" aria-label="Assistant" className="flex w-6 justify-center">
          <Svg w={16} h={15}>
            <circle cx="3" cy="3" r="2.500" fill="#aaa" />
            <circle cx="13" cy="3" r="2.500" fill="#aaa" />
            <ellipse cx="8" cy="7.500" rx="6.500" ry="6.500" fill="#d8d8d8" />
            <circle cx="5.500" cy="6" r="1.200" fill="#333" />
            <circle cx="10.500" cy="6" r="1.200" fill="#333" />
            <ellipse cx="8" cy="10.500" rx="3" ry="2.200" fill="#fff" />
            <circle cx="7" cy="10.500" r=".700" fill="#444" />
            <circle cx="9" cy="10.500" r=".700" fill="#444" />
          </Svg>
        </button>
        <button type="button" aria-label="Sound muted" className="flex w-[23px] justify-center">
          <Svg w={16} h={15}>
            <path d="M.500 4.500h2L6.500 1v12l-4-3.500h-2z" stroke="#fff" />
            <circle cx="11.500" cy="10" r="4.300" fill="#d8232a" />
            <path d="M9.800 8.300l3.400 3.400M13.200 8.300l-3.400 3.400" stroke="#fff" strokeWidth="1.300" />
          </Svg>
        </button>
        <button type="button" className="w-[37px] text-center">ENG</button>
        <button type="button" aria-label="Date and time" className="w-16 text-center text-[12px] leading-[18px]">
          10:19 AM<br />11-Oct-23
        </button>
        <button type="button" aria-label="Notifications" className="flex w-[60px] justify-center pr-[18px]">
          <Svg w={17} h={17}>
            <path d="M.500 1.500h15v11.500h-4.500l-3 3-3-3h-4.500z" stroke="#fff" strokeWidth="1.200" />
          </Svg>
        </button>
      </div>
    </footer>
  );
}

export default function App() {
  return (
    <div className={`flex h-screen flex-col overflow-hidden bg-[#e6e6e6] text-[11px] ${UI}`}>
      <ControlBar />
      <TitleBar />
      <TabBar />
      <Ribbon />
      <div className="flex min-h-0 flex-1">
        <NavigationPane />
        <DocumentView />
        <ScrollColumn />
      </div>
      <StatusBar />
      <Taskbar />
    </div>
  );
}
